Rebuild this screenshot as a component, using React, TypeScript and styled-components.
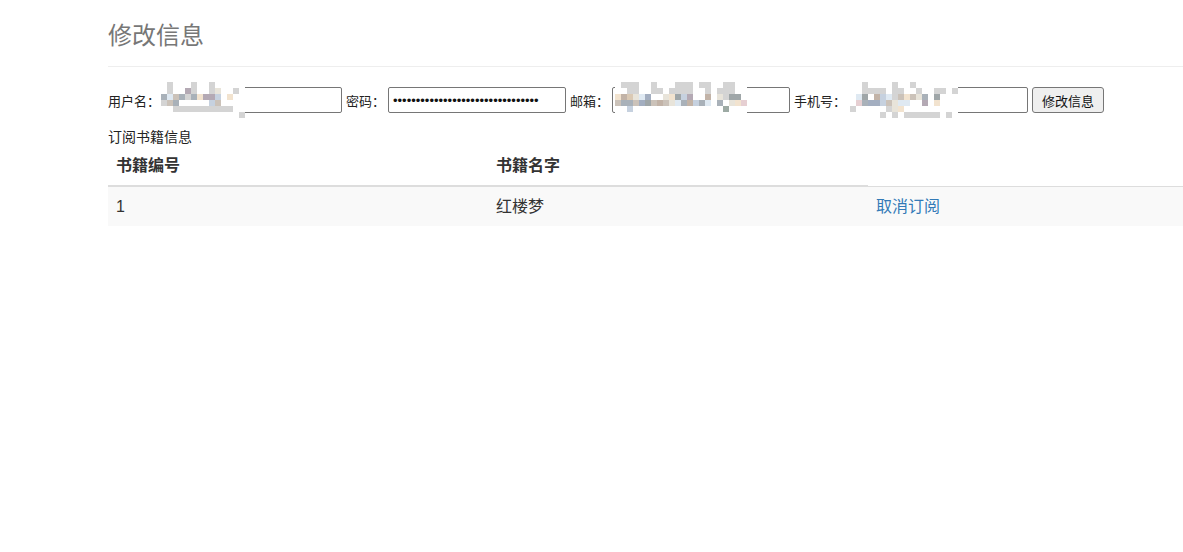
import React from "react";
import styled, { createGlobalStyle } from "styled-components";

const Global = createGlobalStyle`
  html, body { margin: 0; padding: 0; background: #fff; overflow: hidden; }
  body {
    font-family: "Liberation Sans", "Noto Sans CJK SC", sans-serif;
    font-size: 14px;
    color: #333;
  }
`;

const Page = styled.div`
  width: 1140px;
  margin-left: 108px;
`;

const Header = styled.div`
  border-bottom: 1px solid #eee;
  padding-bottom: 17px;
`;

const Title = styled.h2`
  margin: 23px 0 0;
  font-size: 24px;
  line-height: 26px;
  font-weight: 400;
  color: #777;
`;

const Form = styled.form`
  display: flex;
  align-items: center;
  margin-top: 20px;
  height: 26px;
  font-size: 13px;
  color: #222;
`;

const Label = styled.label<{ $first?: boolean; $w: number }>`
  box-sizing: border-box;
  flex: none;
  white-space: nowrap;
  width: ${(p) => p.$w}px;
  margin-left: ${(p) => (p.$first ? 0 : 4)}px;
`;

const Field = styled.span`
  position: relative;
  display: inline-block;
  height: 26px;
`;

const Input = styled.input`
  box-sizing: border-box;
  width: 178px;
  height: 26px;
  border: 1px solid #767676;
  border-radius: 2px;
  padding: 1px 4px;
  font-size: 13px;
  font-family: "Liberation Sans", "Noto Sans CJK SC", sans-serif;
  color: #111;
  background: #fff;
  outline: none;
`;

const Button = styled.button`
  box-sizing: border-box;
  margin-left: 4px;
  height: 26px;
  width: 72px;
  padding: 0;
  border: 1px solid #767676;
  border-radius: 3px;
  background: #efefef;
  font-size: 13px;
  font-family: "Liberation Sans", "Noto Sans CJK SC", sans-serif;
  color: #111;
`;

const MosaicGrid = styled.div<{ $cols: number; $left: number }>`
  position: absolute;
  top: -5px;
  left: ${(p) => p.$left}px;
  display: grid;
  grid-template-columns: repeat(${(p) => p.$cols}, 6px);
  grid-auto-rows: 6px;
  pointer-events: none;
`;

const Cell = styled.span<{ $c: string }>`
  background: ${(p) => p.$c};
`;

const palette: Record<string, string> = {
  ".": "transparent",
  w: "#ffffff",
  g: "#d4d4d4",
  a: "#b4a9b4",
  b: "#a9b1b9",
  c: "#e8e4da",
  d: "#cbc2b9",
  e: "#dfe9f2",
  f: "#f2e3cf",
  h: "#c6d1df",
  k: "#9fa6a8",
  m: "#c2b3a7",
  n: "#a3aec0",
  p: "#dac9b4",
  q: "#9daaa4",
  r: "#e6cfd2",
};

const Mosaic: React.FC<{ rows: string[]; left: number }> = ({ rows, left }) => (
  <MosaicGrid $cols={rows[0].length} $left={left}>
    {rows.flatMap((r, i) =>
      r.split("").map((ch, j) => <Cell key={`${i}-${j}`} $c={palette[ch] || "transparent"} />)
    )}
  </MosaicGrid>
);

const userRows = [
  "wgwwwgwwgwwwww",
  "wgwwagwwgcwwgw",
  "bedbgbfaahwfww",
  "gdbwwwwwhdwwww",
  "wwggggggggggww",
  "wwwwwwwwwwwwwg",
];

const emailRows = [
  "wgggwwgwwwgggwggwwggww",
  "wwggwwggwggggwwgwgggww",
  "fmpcenwwcfkhawwmwcgkkw",
  "dbbdnkdmdcebmhbewbwcfr",
  "wwhwwwwwwwwwwwwwwwqwww",
  "wwwwwwwwwwwwwwwwwwwwww",
];

const phoneRows = [
  "wwgwwwwgwwgwwwwwww",
  "wwggggwggwwgwwggwg",
  "wekwmhegdfdcbwkwww",
  "wrbnnhdceewwawfwww",
  "gwwwwwgcfwwwwwwwww",
  "wwwwwgwgwggggggwgw",
];

const Caption = styled.div`
  margin-top: 14px;
  font-size: 14px;
  line-height: 20px;
  color: #222;
`;

const Table = styled.table`
  width: 1140px;
  margin-top: 1px;
  border-collapse: collapse;
  border-spacing: 0;
  table-layout: fixed;
  font-size: 16px;
`;

const Th = styled.th`
  text-align: left;
  padding: 7px 8px 9px;
  line-height: 21px;
  font-weight: 700;
  vertical-align: bottom;
  border-bottom: 2px solid #ddd;
`;

const Row = styled.tr<{ $striped?: boolean }>`
  background: ${(p) => (p.$striped ? "#f9f9f9" : "transparent")};
`;

const Td = styled.td`
  padding: 9px 8px 9px;
  line-height: 21px;
  border-top: 1px solid #ddd;
`;

const Link = styled.a`
  color: #337ab7;
  text-decoration: none;
`;

export default function App() {
  return (
    <>
      <Global />
      <Page>
        <Header>
          <Title>修改信息</Title>
        </Header>
        <Form onSubmit={(e) => e.preventDefault()}>
          <Label $first $w={56}>用户名：</Label>
          <Field>
            <Input type="text" defaultValue="" />
            <Mosaic rows={userRows} left={-3} />
          </Field>
          <Label $w={42}>密码：</Label>
          <Field>
            <Input type="password" defaultValue="12345678901234567890123456789012" />
          </Field>
          <Label $w={42}>邮箱：</Label>
          <Field>
            <Input type="text" defaultValue="" />
            <Mosaic rows={emailRows} left={3} />
          </Field>
          <Label $w={56}>手机号：</Label>
          <Field>
            <Input type="text" defaultValue="" />
            <Mosaic rows={phoneRows} left={0} />
          </Field>
          <Button type="submit">修改信息</Button>
        </Form>
        <Caption>订阅书籍信息</Caption>
        <Table>
          <colgroup>
            <col style={{ width: 380 }} />
            <col style={{ width: 380 }} />
            <col style={{ width: 380 }} />
          </colgroup>
          <thead>
            <tr>
              <Th>书籍编号</Th>
              <Th>书籍名字</Th>
            </tr>
          </thead>
          <tbody>
            <Row $striped>
              <Td>1</Td>
              <Td>红楼梦</Td>
              <Td>
                <Link href="#">取消订阅</Link>
              </Td>
            </Row>
          </tbody>
        </Table>
      </Page>
    </>
  );
}
